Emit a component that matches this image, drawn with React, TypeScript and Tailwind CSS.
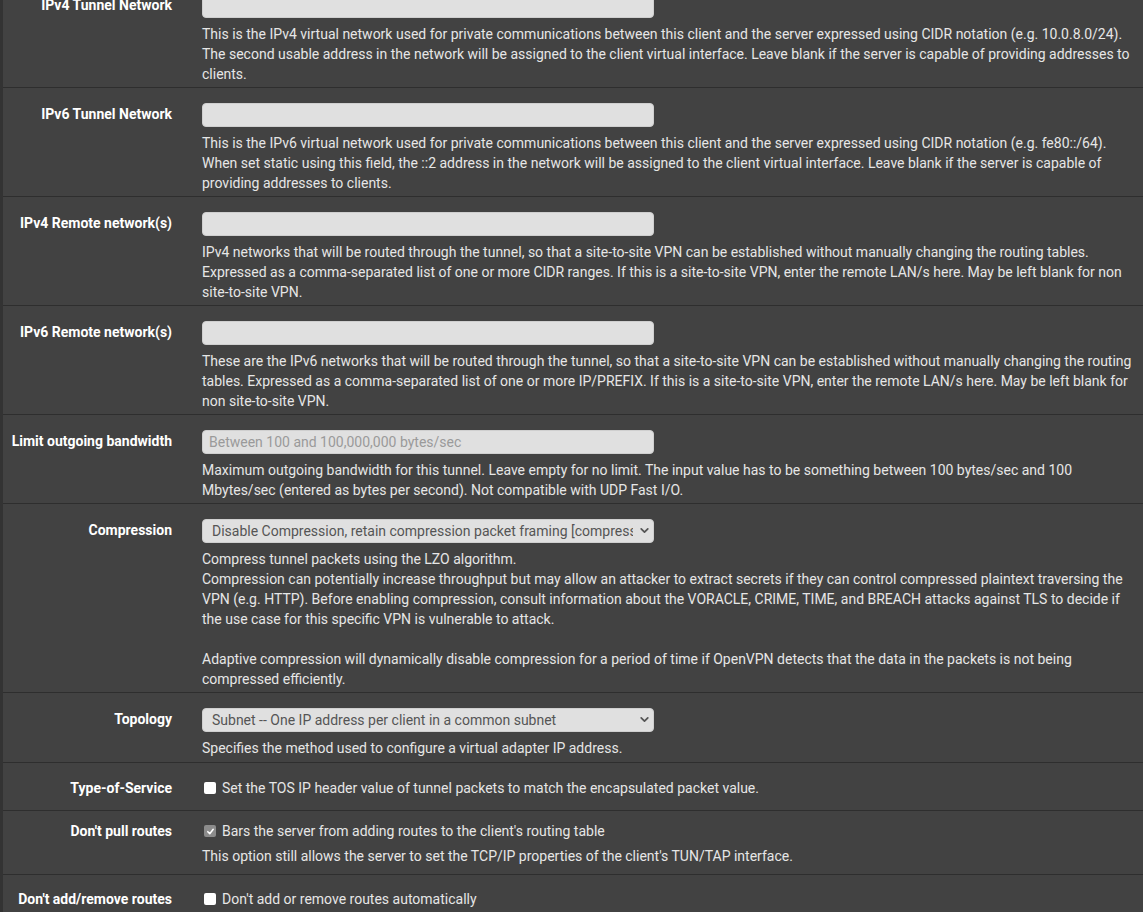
import React from "react";

type Row = {
  label: string;
  kind: "input" | "select" | "checkbox";
  placeholder?: string;
  value?: string;
  checked?: boolean;
  checkText?: string;
  help?: React.ReactNode;
  pad?: string;
};

const rows: Row[] = [
  {
    label: "IPv4 Tunnel Network",
    kind: "input",
    help: "This is the IPv4 virtual network used for private communications between this client and the server expressed using CIDR notation (e.g. 10.0.8.0/24). The second usable address in the network will be assigned to the client virtual interface. Leave blank if the server is capable of providing addresses to clients.",
  },
  {
    label: "IPv6 Tunnel Network",
    kind: "input",
    help: "This is the IPv6 virtual network used for private communications between this client and the server expressed using CIDR notation (e.g. fe80::/64). When set static using this field, the ::2 address in the network will be assigned to the client virtual interface. Leave blank if the server is capable of providing addresses to clients.",
  },
  {
    label: "IPv4 Remote network(s)",
    kind: "input",
    help: "IPv4 networks that will be routed through the tunnel, so that a site-to-site VPN can be established without manually changing the routing tables. Expressed as a comma-separated list of one or more CIDR ranges. If this is a site-to-site VPN, enter the remote LAN/s here. May be left blank for non site-to-site VPN.",
  },
  {
    label: "IPv6 Remote network(s)",
    kind: "input",
    help: "These are the IPv6 networks that will be routed through the tunnel, so that a site-to-site VPN can be established without manually changing the routing tables. Expressed as a comma-separated list of one or more IP/PREFIX. If this is a site-to-site VPN, enter the remote LAN/s here. May be left blank for non site-to-site VPN.",
  },
  {
    label: "Limit outgoing bandwidth",
    kind: "input",
    placeholder: "Between 100 and 100,000,000 bytes/sec",
    help: "Maximum outgoing bandwidth for this tunnel. Leave empty for no limit. The input value has to be something between 100 bytes/sec and 100 Mbytes/sec (entered as bytes per second). Not compatible with UDP Fast I/O.",
  },
  {
    label: "Compression",
    kind: "select",
    value: "Disable Compression, retain compression packet framing [compress]",
    help: (
      <>
        Compress tunnel packets using the LZO algorithm.
        <br />
        Compression can potentially increase throughput but may allow an attacker to extract secrets if they can control compressed plaintext traversing the VPN (e.g. HTTP). Before enabling compression, consult information about the VORACLE, CRIME, TIME, and BREACH attacks against TLS to decide if the use case for this specific VPN is vulnerable to attack.
        <br />
        <br />
        Adaptive compression will dynamically disable compression for a period of time if OpenVPN detects that the data in the packets is not being compressed efficiently.
      </>
    ),
  },
  {
    label: "Topology",
    kind: "select",
    value: "Subnet -- One IP address per client in a common subnet",
    help: "Specifies the method used to configure a virtual adapter IP address.",
    pad: "pt-[15px] pb-[4px]",
  },
  {
    label: "Type-of-Service",
    kind: "checkbox",
    checkText: "Set the TOS IP header value of tunnel packets to match the encapsulated packet value.",
    pad: "pt-[15px] pb-[12px]",
  },
  {
    label: "Don't pull routes",
    kind: "checkbox",
    checked: true,
    checkText: "Bars the server from adding routes to the client's routing table",
    help: "This option still allows the server to set the TCP/IP properties of the client's TUN/TAP interface.",
    pad: "pt-[10px] pb-[8px]",
  },
  {
    label: "Don't add/remove routes",
    kind: "checkbox",
    checkText: "Don't add or remove routes automatically",
    pad: "pt-[14px] pb-[13px]",
  },
];

function Chevron() {
  return (
    <svg width="11" height="11" viewBox="0 0 10 10" className="pointer-events-none absolute right-[4px] top-[6px]">
      <path d="M2 3.5 L5 6.5 L8 3.5" fill="none" stroke="#555" strokeWidth="1.6" strokeLinecap="round" strokeLinejoin="round" />
    </svg>
  );
}

function CheckBox({ checked }: { checked?: boolean }) {
  return (
    <span
      className={
        checked
          ? "flex h-[12px] w-[12px] shrink-0 items-center justify-center rounded-[2px] bg-[#8c8c8c]"
          : "flex h-[12px] w-[12px] shrink-0 rounded-[2px] bg-white"
      }
    >
      {checked && (
        <svg width="9" height="9" viewBox="0 0 10 10">
          <path d="M2 5.2 L4.2 7.4 L8 2.6" fill="none" stroke="#fff" strokeWidth="1.7" strokeLinecap="round" strokeLinejoin="round" />
        </svg>
      )}
    </span>
  );
}

function FormRow({ row }: { row: Row }) {
  const isCheck = row.kind === "checkbox";
  const pad = row.pad ?? "pt-[15px] pb-[3px]";
  return (
    <div className={"flex border-b border-[#2e2e2e] " + pad}>
      <div
        className={
          "w-[184px] shrink-0 pr-[15px] text-right text-[14px] font-bold leading-[20px] text-white " +
          (isCheck ? "" : "pt-[1px]")
        }
      >
        {row.label}
      </div>
      <div className="min-w-0 flex-1 pl-[15px] pr-[10px]">
        {row.kind === "input" && (
          <input
            type="text"
            placeholder={row.placeholder}
            className="block h-[24px] w-[452px] rounded-[4px] border border-[#cfcfcf] bg-[#e0e0e0] px-[6px] text-[14px] text-[#555] placeholder:text-[#9a9a9a] outline-none"
          />
        )}
        {row.kind === "select" && (
          <div className="relative w-[452px]">
            <select
              defaultValue={row.value}
              className="block h-[24px] w-full appearance-none overflow-hidden whitespace-nowrap rounded-[4px] border border-[#cfcfcf] bg-[#e0e0e0] pl-[9px] pr-[20px] text-[14px] text-[#555] outline-none"
            >
              <option>{row.value}</option>
            </select>
            <Chevron />
          </div>
        )}
        {isCheck && (
          <div className="flex h-[20px] items-center gap-[6px] pl-[2px] text-[14px] leading-[20px] text-[#e6e6e6]">
            <CheckBox checked={row.checked} />
            <span>{row.checkText}</span>
          </div>
        )}
        {row.help && (
          <div className={"text-[14px] leading-[20px] text-[#e6e6e6] " + (isCheck ? "mt-[5px]" : "mt-[6px]")}>
            {row.help}
          </div>
        )}
      </div>
    </div>
  );
}

export default function App() {
  return (
    <div
      className="h-[912px] w-[1143px] overflow-hidden border-l-[3px] border-[#333333] bg-[#424242]"
      style={{ fontFamily: "Roboto, 'Liberation Sans', sans-serif" }}
    >
      <div className="-mt-[21px]">
        {rows.map((r) => (
          <FormRow key={r.label} row={r} />
        ))}
      </div>
    </div>
  );
}
